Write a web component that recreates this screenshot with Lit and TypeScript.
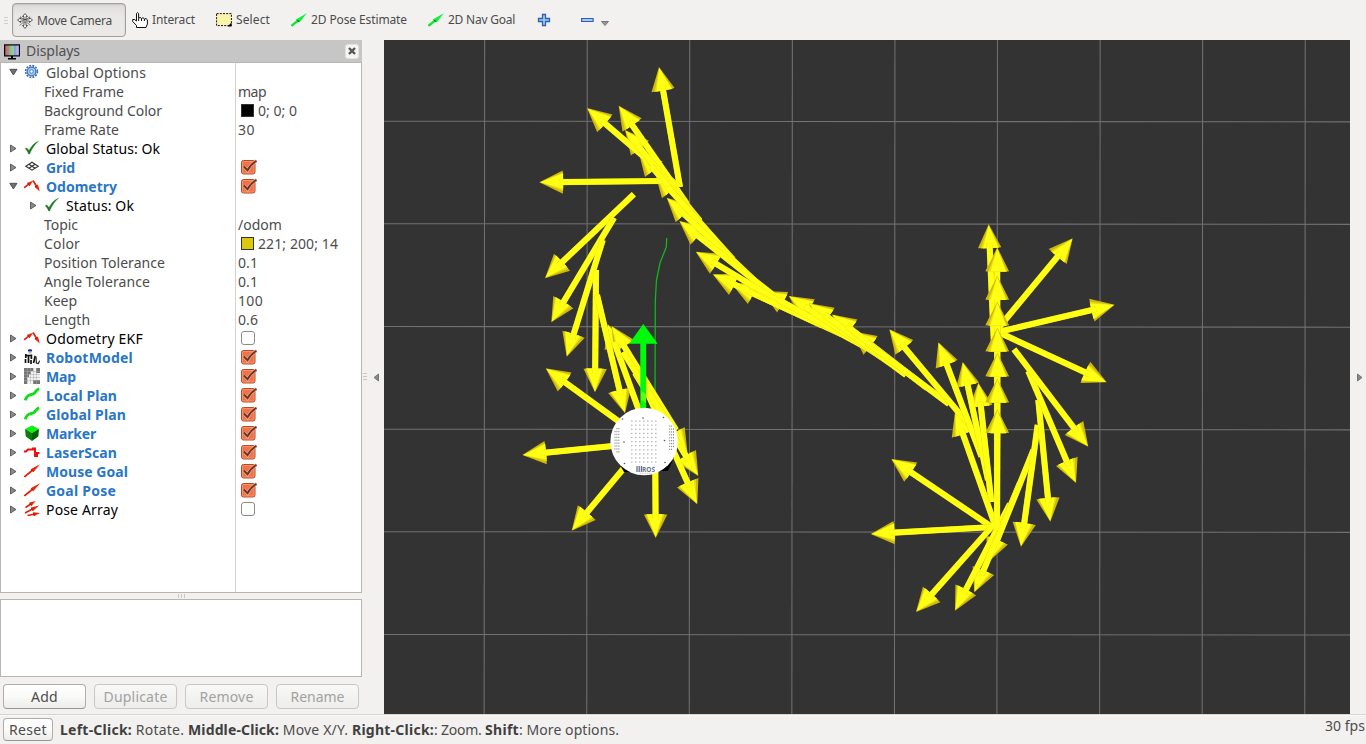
import { LitElement, html, svg, css, nothing } from "lit";
import { customElement, property } from "lit/decorators.js";
import { classMap } from "lit/directives/class-map.js";

/** A one-line label whose tracking is adjusted to fill a given width. */
@customElement("fit-label")
class FitLabel extends LitElement {
  static styles = css`
    :host { display: inline-block; white-space: pre; flex: none; }
  `;
  @property({ type: Number }) w = 0;
  @property() text = "";
  render() {
    return html`<span>${this.text}</span>`;
  }
  firstUpdated() {
    const span = this.renderRoot.querySelector("span") as HTMLElement;
    const natural = span.getBoundingClientRect().width;
    const n = this.text.length;
    this.style.width = this.w + "px";
    span.style.letterSpacing = ((this.w - natural) / n).toFixed(3) + "px";
  }
}

const label = (text: string, w: number) => html`<fit-label .text=${text} .w=${w}></fit-label>`;

const redArrow = (x1: number, y1: number, x2: number, y2: number) => {
  const mx = (x1 + x2) / 2, my = (y1 + y2) / 2;
  const l = Math.hypot(x2 - x1, y2 - y1), ux = (x2 - x1) / l, uy = (y2 - y1) / l;
  return svg`<path d="M${x1} ${y1}L${mx} ${my}" stroke="#e8200a" stroke-width="1.7"/>
    <path d="M${mx - uy * 2} ${my + ux * 2}L${x2} ${y2}L${mx + uy * 2} ${my - ux * 2}z" fill="#f02408"/>
    <path d="M${mx - uy * 1.6} ${my + ux * 1.6}L${mx + uy * 1.6} ${my - ux * 1.6}" stroke="#a51200" stroke-width="1"/>`;
};

const icons: Record<string, unknown> = {
  gear: svg`<circle cx="7.5" cy="7.5" r="5.9" fill="none" stroke="#3a6fb5" stroke-width="1.6" stroke-dasharray="1.9 1.2"/>
    <circle cx="7.5" cy="7.5" r="4.4" fill="#a8c8ee" stroke="#3d76be" stroke-width="1.3"/>
    <circle cx="7.5" cy="7.5" r="1.8" fill="#eef5ff" stroke="#4c80c4" stroke-width="1"/>`,
  ok: svg`<path d="M1.200 8.8L2.8 8L5 10.6C7 6.8 9.5 3.4 14.3 1.2C10.5 4.6 7.8 8.6 5.6 14H4.6C3.8 11.8 2.8 10 1.2 8.8z" fill="#1b7a22" stroke="#1b7a22" stroke-width=".4"/>`,
  grid: svg`<g fill="none" stroke="#333" stroke-width="1.1"><path d="M8 3.2L14.2 7.2L8 11.2L1.8 7.2z"/><path d="M4.9 5.2L11.1 9.2M11.1 5.2L4.9 9.2"/></g>`,
  odom: svg`${redArrow(0, 9.8, 9, 2.800)}${redArrow(9, 2.500, 15.800, 13.500)}`,
  robot: svg`<ellipse cx="6" cy="1.5" rx="2.2" ry="1.3" fill="#18208a"/><path d="M4.5 2.5h3v2h-3z" fill="#bbb"/>
    <path d="M1.8 5v4M1.5 10v4M4.5 6v8M7.4 5.5v4.5M7 11v4M2 6.5h5M11 8l-1.5 6" stroke="#111" stroke-width="1.7" fill="none"/><path d="M10 7l2 1l.4 6l2 .6l1.2-3" stroke="#222" stroke-width="1.2" fill="none"/>`,
  map: svg`<path d="M0 0h16v16H0z" fill="#f2f2f2"/><path d="M0 0h9v3H7v3H5v3H3v7H0zM12 0h4v5h-4zM9 12h7v4H9zM0 12h3v4H0z" fill="#747474"/>
    <path d="M3.5 0v16M6.5 0v16M9.5 0v16M12.500 0v16M0 3.500h16M0 6.500h16M0 9.500h16M0 12.500h16" stroke="#aaa" stroke-width=".5"/>`,
  path: svg`<path d="M1.200 13.300C3.500 6.500 6 8.500 9 7C12.500 5.500 11 3 15.200 1.800" stroke="#10dd18" stroke-width="2.900" fill="none"/>`,
  marker: svg`<path d="M8 .5L15 4L8 8L1 4z" fill="#0df20d"/><path d="M1 4L8 8V16L1.800 11.500z" fill="#087d08"/><path d="M15 4L8 8V16L14.300 11.500z" fill="#046004"/>`,
  laser: svg`<path d="M0 7.500h2L4 5.500h5V4.500h2V12h2V9h2.500" stroke="#f01010" stroke-width="2" fill="none"/>`,
  pose: redArrow(0.5, 13.800, 16, 1.200),
  poses: svg`${redArrow(1.500, 6.500, 11.500, 0)}${redArrow(1, 12, 15, 4.500)}${redArrow(3.500, 14.500, 16, 12)}`,
};

const icon = (name: string) => html`<svg class="ico" width="16" height="16" viewBox="0 0 16 16">${icons[name]}</svg>`;

interface Row {
  t: string; w: number; icon?: string; exp?: "open" | "shut"; level?: number;
  kind?: "on" | "black"; v?: string; vw?: number; swatch?: string; check?: boolean;
}

const rows: Row[] = [
  { t: "Global Options", w: 100, icon: "gear", exp: "open" },
  { t: "Fixed Frame", w: 80, level: 1, v: "map", vw: 28 },
  { t: "Background Color", w: 118, level: 1, v: "0; 0; 0", vw: 39, swatch: "#000" },
  { t: "Frame Rate", w: 75, level: 1, v: "30", vw: 17 },
  { t: "Global Status: Ok", w: 114, icon: "ok", exp: "shut", kind: "black" },
  { t: "Grid", w: 29, icon: "grid", exp: "shut", kind: "on", check: true },
  { t: "Odometry", w: 71, icon: "odom", exp: "open", kind: "on", check: true },
  { t: "Status: Ok", w: 68, icon: "ok", exp: "shut", kind: "black", level: 2 },
  { t: "Topic", w: 34, level: 1, v: "/odom", vw: 44 },
  { t: "Color", w: 36, level: 1, v: "221; 200; 14", vw: 80, swatch: "#ddc80e" },
  { t: "Position Tolerance", w: 121, level: 1, v: "0.1", vw: 20 },
  { t: "Angle Tolerance", w: 106, level: 1, v: "0.1", vw: 20 },
  { t: "Keep", w: 33, level: 1, v: "100", vw: 25 },
  { t: "Length", w: 46, level: 1, v: "0.6", vw: 20 },
  { t: "Odometry EKF", w: 97, icon: "odom", exp: "shut", kind: "black", check: false },
  { t: "RobotModel", w: 87, icon: "robot", exp: "shut", kind: "on", check: true },
  { t: "Map", w: 30, icon: "map", exp: "shut", kind: "on", check: true },
  { t: "Local Plan", w: 71, icon: "path", exp: "shut", kind: "on", check: true },
  { t: "Global Plan", w: 80, icon: "path", exp: "shut", kind: "on", check: true },
  { t: "Marker", w: 50, icon: "marker", exp: "shut", kind: "on", check: true },
  { t: "LaserScan", w: 71, icon: "laser", exp: "shut", kind: "on", check: true },
  { t: "Mouse Goal", w: 82, icon: "pose", exp: "shut", kind: "on", check: true },
  { t: "Goal Pose", w: 70, icon: "pose", exp: "shut", kind: "on", check: true },
  { t: "Pose Array", w: 72, icon: "poses", exp: "shut", kind: "black", check: false },
];

@customElement("displays-tree")
class DisplaysTree extends LitElement {
  static styles = css`
    :host { display: block; }
    .tree { height: 529px; border: 1px solid #b9b5af; background: #fff; display: grid; grid-template-columns: 234px 1fr; grid-auto-rows: 19px; align-content: start; background-image: linear-gradient(#d4d2cf, #d4d2cf); background-size: 1px 100%; background-repeat: no-repeat; background-position: 234px 0; }
    .name, .val { display: flex; align-items: center; height: 19px; color: #4c4c4c; line-height: 19px; }
    .name { padding-left: 7px; }
    .name.l1 { padding-left: 43px; }
    .name.l2 { padding-left: 27px; }
    .val { padding-left: 3px; }
    .on { color: #2a76c6; font-weight: 700; }
    .black { color: #000; }
    .exp { width: 11px; height: 11px; margin-right: 5px; flex: none; }
    .ico { margin-right: 6px; flex: none; margin-top: -2px; }
    .swatch { width: 11px; height: 11px; border: 1px solid #333; margin: 0 4px 0 3px; }
    .check { margin: -2px 0 0 3px; }
  `;
  expander(kind: string) {
    return html`<svg class="exp" width="11" height="11" viewBox="0 0 11 11">
      ${kind === "open"
        ? svg`<path d="M1.800 2.300H9L5.400 8z" fill="#707070" stroke="#4a4a4a" stroke-width=".9"/>`
        : svg`<path d="M2.500 2L8 5.500L2.500 9z" fill="#8a8a8a" stroke="#555" stroke-width=".9"/>`}
    </svg>`;
  }
  box(on: boolean) {
    return html`<svg class="check" width="17" height="16" viewBox="0 0 17 16">
      ${on
        ? svg`<rect x=".5" y="1.500" width="13.500" height="13.500" rx="2" fill="#ee7348" stroke="#b5492a"/><rect x="1.500" y="2.500" width="11.500" height="11.500" rx="1" fill="none" stroke="#f79a77" stroke-width=".8"/>
          <path d="M2.800 7.500L6.500 11.500C8.500 7.500 11 4.500 15.500 1.800" stroke="#f9b092" stroke-width="3.300" fill="none"/>
          <path d="M2.800 7.500L6.500 11.200C8.500 7.500 11 4.500 15.500 1.800" stroke="#6b3525" stroke-width="1.900" fill="none"/>`
        : svg`<rect x=".5" y="1.500" width="13" height="13" rx="2.500" fill="#fff" stroke="#8f8a84"/>`}
    </svg>`;
  }
  render() {
    return html`<div class="tree">
      ${rows.map((r) => html`
        <div class=${classMap({ name: true, l1: r.level === 1, l2: r.level === 2, on: r.kind === "on", black: r.kind === "black" })}>
          ${r.exp ? this.expander(r.exp) : nothing}${r.icon ? icon(r.icon) : nothing}${label(r.t, r.w)}
        </div>
        <div class="val">
          ${r.swatch ? html`<span class="swatch" style="background:${r.swatch}"></span>` : nothing}
          ${r.v ? label(r.v, r.vw!) : nothing}${r.check !== undefined ? this.box(r.check) : nothing}
        </div>`)}
    </div>`;
  }
}

type Arrow = [number, number, number, number];

/** Odometry samples: tip x, tip y, tail x, tail y. */
const arrows: Arrow[] = [
  [659, 67, 680, 187], [587, 108, 679, 187], [618.7, 105.7, 687, 204], [625, 130, 700, 221],
  [638.5, 151.5, 716, 241], [655, 173, 733, 259.5], [666.7, 197.7, 754, 280], [679.3, 221, 773, 295],
  [695.7, 251.7, 800, 314], [712.7, 274.3, 822, 325.500], [731.5, 283.5, 841, 334], [762, 291, 868, 348.500],
  [788.7, 296, 890, 363], [808.8, 303.2, 906, 375], [831.8, 314.4, 927, 388], [851.8, 331.3, 949, 404],
  [889.3, 329.3, 967, 422.5], [938.3, 342.3, 981.5, 456.5], [962.7, 362, 988, 480], [978.3, 382.7, 991.3, 502],
  [955, 411.7, 995, 525], [891.3, 459, 993, 527.7], [870.7, 534, 993, 527], [916, 612, 996, 522],
  [955, 610.7, 1010, 504], [974.3, 592.3, 1020, 483], [988.3, 562, 1033.500, 450], [1021, 546.7, 1037.7, 425],
  [1050.3, 521.7, 1038.3, 400], [1076, 483, 1028.3, 371], [1088.3, 446.7, 1014, 349.3], [1106.7, 382.3, 998, 332],
  [1114.7, 304.7, 998, 332], [1072.7, 238.3, 996, 331], [988.7, 224.3, 994, 345],
  [997.3, 247.7, 997, 333], [997.3, 276, 997, 400], [997.3, 301.7, 997, 420], [997.3, 327.7, 997, 440],
  [997.3, 352.7, 997, 470], [997.3, 378.7, 997, 500], [997.3, 409.3, 997, 530],
  [539.3, 182.3, 662, 181], [545, 278.3, 633.8, 194.3], [551.3, 322.3, 614, 217.7], [566.7, 356.7, 602.7, 240],
  [595, 392.3, 596, 270], [625, 413.3, 597, 295], [607.6, 324, 649, 438], [611.5, 326, 676, 430],
  [545.7, 368.3, 643, 439], [522.3, 455, 643, 443], [571.7, 530.7, 649, 438], [655.7, 538, 655, 417],
  [698.3, 476, 635, 373], [697.3, 504.3, 648, 394], [687.5, 453, 623, 352],
];

const plan = "M666.7 238L666.3 247L660 263L656.5 280L655.3 300L655 407";

@customElement("odometry-view")
class OdometryView extends LitElement {
  static styles = css`
    :host { display: block; width: 966px; height: 674px; background: #333; }
    svg { display: block; }
    .logo { font: 700 7px "Open Sans", sans-serif; fill: #66708a; }
  `;
  head([x, y, tx, ty]: Arrow) {
    const l = Math.hypot(tx - x, ty - y), ux = (tx - x) / l, uy = (ty - y) / l;
    const p = (a: number, b: number) => `${(x + ux * a - uy * b).toFixed(1)},${(y + uy * a + ux * b).toFixed(1)}`;
    return svg`<polygon points="${p(0, 0)} ${p(23.5, 11.7)} ${p(23.5, -11.7)}" fill="#cdb80f"/>
      <polygon points="${p(1, 0)} ${p(23.7, 8.9)} ${p(23.7, -9.8)}" fill="#e9da12"/>
      <polygon points="${p(1, 0)} ${p(23.9, 6.8)} ${p(23.9, -8.8)}" fill="#ffff14"/>`;
  }
  shaft([x, y, tx, ty]: Arrow) {
    const l = Math.hypot(tx - x, ty - y), ux = (tx - x) / l, uy = (ty - y) / l;
    return svg`<path d="M${x + ux * 19} ${y + uy * 19}L${tx} ${ty}" stroke="#e8d912" stroke-width="6.200"/>
      <path d="M${x + ux * 19} ${y + uy * 19}L${tx} ${ty}" stroke="#ffff14" stroke-width="5.600"/>`;
  }
  dots() {
    const out = [];
    for (let r = 0; r < 11; r++) {
      for (let c = 0; c < 7; c++) out.push(svg`<rect x=${631.3 + c * 4} y=${420.5 + r * 4.1} width="1.1" height="1.2" fill="#999"/>`);
    }
    for (let r = 0; r < 9; r++) {
      const inset = r === 0 || r === 8 ? 1 : 0;
      for (let c = inset; c < 3; c++) {
        out.push(svg`<rect x=${614.5 + c * 1.9} y=${428 + r * 2.9} width="1" height="1.3" fill="#888"/>`);
        out.push(svg`<rect x=${673 - c * 1.9} y=${425.5 + r * 2.9} width="1" height="1.3" fill="#888"/>`);
      }
    }
    for (const [x, y] of [[622.5, 419], [643, 418], [663.5, 417.5], [624, 442], [664.5, 440.5], [624.5, 463.5], [665, 462.5]])
      out.push(svg`<circle cx=${x} cy=${y} r=".8" fill="#555"/>`);
    return out;
  }
  render() {
    const xs = [484.4, 587.0, 689.5, 792.1, 894.7, 997.2, 1099.9, 1202.4, 1305];
    const ys = [121.5, 224, 326.8, 429.5, 532, 634.7];
    return html`<svg width="966" height="674" viewBox="384 40 966 674">
      <g stroke="#717171" stroke-width="1.05">
        ${xs.map((x) => svg`<path d="M${x + 0.25} 40L${x - 0.25} 714"/>`)}
        ${ys.map((y) => svg`<path d="M384 ${y - 0.25}L1350 ${y + 0.35}"/>`)}
      </g>
      <path d=${plan} fill="none" stroke="#10b81a" stroke-width="1.3"/>
      ${arrows.map((a) => this.head(a))}
      ${arrows.map((a) => this.shaft(a))}
      ${arrows.slice(35, 42).map((a) => this.head(a))}
      <path d="M643.3 324L657.7 343.7H646.2V410H640.3V343.7H629z" fill="#00fb0a"/>
      <path d="M641 391l5 3v9l-5-3z" fill="#ffff14" opacity=".35"/>
      <path d="M617 460L624 472H634V460zM674 457L668 471H656V462z" fill="#000"/>
      <circle cx="644.1" cy="441.5" r="33.7" fill="#fff"/>
      ${this.dots()}
      <path d="M637 466v6M639.2 466v6M641.4 466v6" stroke="#66708a" stroke-width="1.3"/>
      <text class="logo" x="642" y="471.7" textLength="13" lengthAdjust="spacingAndGlyphs">ROS</text>
      <path d="M640 473.3h12" stroke="#b8bdca" stroke-width=".8" stroke-dasharray="1.5 .8"/>
    </svg>`;
  }
}

@customElement("app-root")
class AppRoot extends LitElement {
  static styles = css`
    :host { display: flex; flex-direction: column; width: 1366px; height: 744px; overflow: hidden; background: #f2f1ef; color: #4c4c4c; font-family: "Noto Sans", "Open Sans", sans-serif; font-size: 14px; }
    * { box-sizing: border-box; }
    .toolbar { height: 40px; flex: none; display: flex; align-items: flex-start; font-size: 12px; line-height: 16px; }
    .handle { width: 4px; height: 8px; margin: 17px 4px 0 4px; background: repeating-linear-gradient(#d0cecb 0 1px, transparent 1px 3px); flex: none; }
    .active { width: 114px; height: 34px; margin-top: 3px; border: 1px solid #a39f9a; border-radius: 4px; background: linear-gradient(#dfdddb, #e9e8e6 40%, #eae9e7); box-shadow: inset 0 1px 2px #c4c2be; display: flex; align-items: center; padding: 1px 0 0 4px; }
    .active svg { margin-right: 4px; }
    .tool { display: flex; height: 16px; margin-top: 12px; }
    .tool svg { margin-right: 4px; flex: none; }
    .t1 { margin-left: 6px; } .t2 { margin-left: 21px; } .t3 { margin-left: 21px; } .t4 { margin-left: 21px; }
    .t5 { margin-left: 22px; } .t6 { margin-left: 24px; } .t7 { margin-left: 0; }
    .main { height: 674px; flex: none; display: flex; }
    .panel { width: 362px; display: flex; flex-direction: column; }
    .title { height: 22px; background: #c6c6c6; display: flex; align-items: center; padding: 0 3px 0 4px; color: #505050; }
    .title .mon { margin: 1px 6px 0 0; }
    .title fit-label { margin-top: -2px; }
    .close { margin-left: auto; width: 14px; height: 15px; border-radius: 3px; background: #f5f5f4; border: 1px solid #e3e2e1; display: grid; place-items: center; }
    .split { height: 6px; flex: none; display: flex; justify-content: center; align-items: center; }
    .vgrip { width: 8px; height: 4px; margin-left: 2px; background: repeating-linear-gradient(90deg, #c9c7c4 0 1px, transparent 1px 3px); }
    .desc { height: 78px; background: #fff; border: 1px solid #b9b5af; flex: none; }
    .buttons { display: flex; gap: 8px; padding: 7px 0 0 3px; }
    .btn { width: 83px; height: 25px; border: 1px solid #b0ada8; border-bottom-color: #99958f; border-radius: 4px; background: linear-gradient(#fff, #fafaf9 50%, #ececea); display: flex; align-items: center; justify-content: center; color: #4c4c4c; }
    .btn.off { color: #a3a19f; border-color: #c9c7c4; background: linear-gradient(#f8f8f7, #ededeb); }
    .gutter { width: 22px; height: 674px; display: flex; align-items: center; }
    .hgrip { width: 4px; height: 8px; margin-left: 1px; background: repeating-linear-gradient(#c9c7c4 0 1px, transparent 1px 3px); }
    .gutter .arrow { margin-left: 6px; }
    .right { width: 16px; display: flex; align-items: center; justify-content: center; padding-left: 3px; }
    .status { height: 30px; border-top: 1px solid #d6d4d1; box-shadow: inset 0 1px #faf9f8; display: flex; align-items: center; padding-left: 3px; }
    .reset { width: 50px; height: 23px; margin: 0 7px 0 0; }
    .hint { display: flex; margin-top: -1px; }
    .b { font-weight: 700; color: #3f3f3f; }
    .fps { margin: -9px 1px 0 auto; }
  `;
  greenArrow() {
    return html`<svg width="16" height="16" viewBox="0 0 16 16"><path d="M.5 13.800L6.500 9" stroke="#0ee830" stroke-width="2.3"/><path d="M4.500 7.800L15.800 1.200L8.500 10.500z" fill="#0ef036"/><path d="M6 8.500l2.200 1" stroke="#0a6a1a" stroke-width="1.2"/></svg>`;
  }
  render() {
    return html`
      <div class="toolbar">
        <span class="handle"></span>
        <div class="active">
          <svg width="16" height="16" viewBox="0 0 16 16"><g fill="#fff" stroke="#444" stroke-width=".9">
            <path d="M8 .6L10.500 3.500H9V6.500H7V3.500H5.500zM8 15.400L10.500 12.500H9V9H7V12.500H5.500zM.5 7L3.500 4.500V6H7V8H3.500V9.500zM15.500 7L12.500 4.500V6H9V8H12.500V9.500z"/><path d="M2.500 12.500L6 9.500M13.500 12.500L10 9.500M3 3.500L6 6M13 3.500L10 6" stroke="#777"/></g></svg>
          ${label("Move Camera", 75)}
        </div>
        <div class="tool t1"><svg width="16" height="16" viewBox="0 0 16 16"><path d="M4.500 15.500V13.500L.7 9.500V7.500H2.500L4.500 9V1.500L5.500 .6L6.600 1.500V6.500L8 5.300L9.500 6.500L11 5.700L12.500 7L14 6.500L15.400 7.800V12L14 15.500z" fill="#fff" stroke="#111"/><path d="M6.600 6.500V9M9.500 6.500V9M12.400 7V9" stroke="#111"/></svg>${label("Interact", 43)}</div>
        <div class="tool t2"><svg width="16" height="16" viewBox="0 0 16 16"><rect x=".6" y="1.600" width="14.800" height="12" fill="#fbf4ab" stroke="#111" stroke-dasharray="2 1.200"/><path d="M15.500 10.500V14.500H11.500z" fill="#000"/></svg>${label("Select", 34)}</div>
        <div class="tool t3">${this.greenArrow()}${label("2D Pose Estimate", 96)}</div>
        <div class="tool t4">${this.greenArrow()}${label("2D Nav Goal", 67)}</div>
        <div class="tool t5"><svg width="16" height="16" viewBox="0 0 16 16"><path d="M5.500 2.500h3v4h4v3h-4v4h-3v-4h-4v-3h4z" fill="#a9c8ee" stroke="#2b62ac" stroke-width="1.3"/></svg></div>
        <div class="tool t6"><svg width="16" height="16" viewBox="0 0 16 16"><path d="M.600 6.500h11.500v3h-11.500z" fill="#a9c8ee" stroke="#2b62ac" stroke-width="1.2"/></svg></div>
        <div class="tool t7"><svg width="9" height="16" viewBox="0 0 9 16"><path d="M.5 9.500H7.500L4 13.500z" fill="#999" stroke="#6f6f6f" stroke-width=".9"/></svg></div>
      </div>
      <div class="main">
        <div class="panel">
          <div class="title">
            <svg class="mon" width="16" height="16" viewBox="0 0 16 16"><defs><linearGradient id="scr"><stop offset="0" stop-color="#c35f63"/><stop offset=".3" stop-color="#b98b86"/><stop offset=".36" stop-color="#7cc884"/><stop offset=".62" stop-color="#93cda8"/><stop offset=".68" stop-color="#8f8fe0"/><stop offset="1" stop-color="#d0d0f5"/></linearGradient></defs>
              <rect x=".6" y=".9" width="14.800" height="11" fill="url(#scr)" stroke="#000" stroke-width="1.2"/><path d="M7 12h2v2h3v1.500H4V14h3z"/></svg>
            ${label("Displays", 54)}
            <span class="close"><svg width="8" height="8" viewBox="0 0 8 8"><path d="M1 1L7 7M7 1L1 7" stroke="#555" stroke-width="2.4"/></svg></span>
          </div>
          <displays-tree></displays-tree>
          <div class="split"><span class="vgrip"></span></div>
          <div class="desc"></div>
          <div class="buttons">
            <div class="btn">${label("Add", 27)}</div>
            <div class="btn off">${label("Duplicate", 64)}</div>
            <div class="btn off">${label("Remove", 54)}</div>
            <div class="btn off">${label("Rename", 54)}</div>
          </div>
        </div>
        <div class="gutter"><span class="hgrip"></span><svg class="arrow" width="7" height="9" viewBox="0 0 7 9"><path d="M5.500 1V8L1 4.500z" fill="#888" stroke="#666" stroke-width=".8"/></svg></div>
        <odometry-view></odometry-view>
        <div class="right"><svg width="7" height="9" viewBox="0 0 7 9"><path d="M1.500 1V8L6 4.500z" fill="#888" stroke="#666" stroke-width=".8"/></svg></div>
      </div>
      <div class="status">
        <div class="btn reset">${label("Reset", 38)}</div>
        <div class="hint">
          <span class="b">${label("Left-Click:", 72)}</span>${label(" Rotate. ", 56)}<span class="b">${label("Middle-Click:", 91)}</span>${label(" Move X/Y. ", 73)}<span class="b">${label("Right-Click:", 82)}</span>${label(": Zoom. ", 51)}<span class="b">${label("Shift", 34)}</span>${label(": More options.", 100)}
        </div>
        <div class="fps">${label("30 fps", 40)}</div>
      </div>`;
  }
}
